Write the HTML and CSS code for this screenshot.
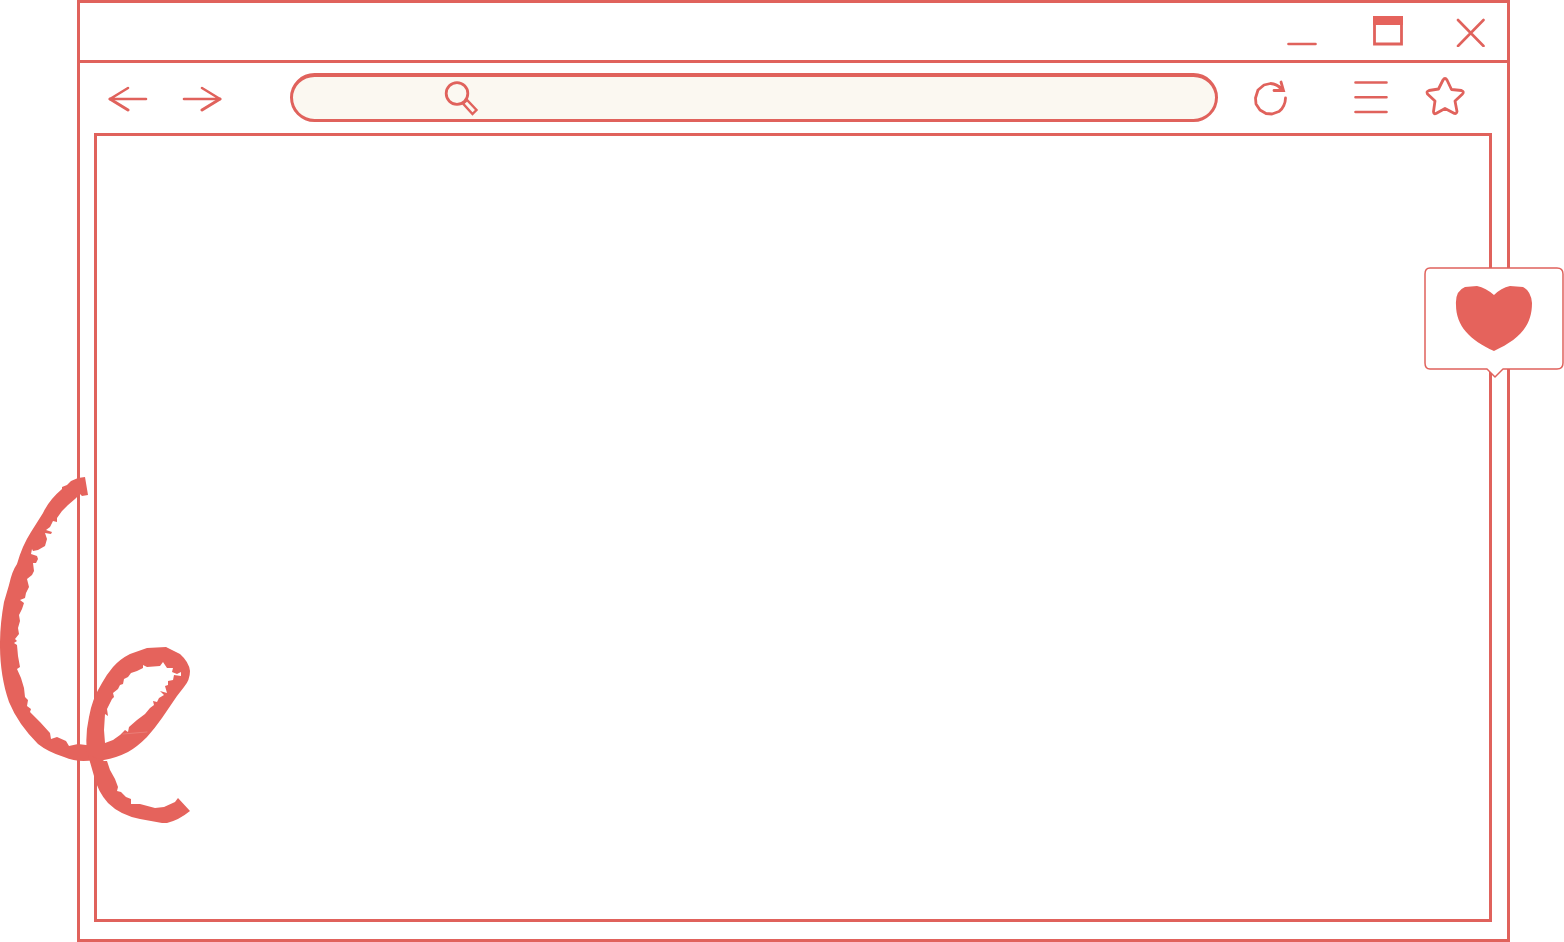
FILE: index.html
```html
<!DOCTYPE html>
<html lang="en">
<head>
    <meta charset="UTF-8">
    <meta name="viewport" content="width=device-width, initial-scale=1.0">
    <title>Browser Window</title>
    <link rel="stylesheet" href="styles.css">
</head>
<body>

<div class="window">
    <header class="titlebar">
        <button type="button" aria-label="Minimize">
            <svg width="34" height="32" viewBox="0 0 34 32"><path d="M1.5 29H28.500" stroke-width="2.6"/></svg>
        </button>
        <button type="button" aria-label="Maximize">
            <svg width="30" height="32" viewBox="0 0 30 32">
                <path d="M1.5 2.5H28.5V29H1.5Z" stroke-width="2.8" stroke-linejoin="miter"/>
                <path class="solid" d="M0 1H30V10H0Z"/>
            </svg>
        </button>
        <button type="button" aria-label="Close">
            <svg width="32" height="32" viewBox="0 0 32 32"><path d="M3 5L28.5 31M28.5 5L3 31" stroke-width="2.6"/></svg>
        </button>
    </header>

    <nav class="toolbar">
        <button type="button" aria-label="Back">
            <svg width="40" height="40" viewBox="0 0 40 40">
                <path d="M38 21H3M20 10L2 21" stroke-width="2.6"/>
                <path d="M2 21L20 32" stroke-width="3"/>
            </svg>
        </button>
        <button type="button" class="forward" aria-label="Forward">
            <svg width="40" height="40" viewBox="0 0 40 40">
                <path d="M2 21H37M20 10L38 21" stroke-width="2.6"/>
                <path d="M38 21L20 32" stroke-width="3"/>
            </svg>
        </button>
        <form class="search">
            <svg width="36" height="38" viewBox="0 0 36 38" aria-hidden="true">
                <circle cx="13" cy="14.500" r="10.800" stroke-width="2.8"/>
                <path d="M19 24.500L23 21L32.500 31L28.500 35Z" stroke-width="2.4" stroke-linejoin="miter"/>
            </svg>
            <input type="text" aria-label="Search">
        </form>
        <button type="button" class="reload" aria-label="Reload">
            <svg width="36" height="40" viewBox="0 0 36 40">
                <path d="M32.5 20C32.5 25 30 31 26 33.5L19 36L13 35.5L7 32L3 26L2.5 20L5 12L11 7L17.5 5.500C23 5.800 26 8 29 11" stroke-width="2.8"/>
                <path d="M28 4L30.500 12.500H21" stroke-linejoin="miter" stroke-width="2.800"/>
                <path class="solid" d="M22 6L31 13L20 14L26 11Z"/>
            </svg>
        </button>
        <button type="button" class="menu" aria-label="Menu">
            <svg width="34" height="40" viewBox="0 0 34 40"><path d="M1.5 4.500H32.500M1.5 19.300H32.500M1.5 34H32.500" stroke-width="2.600"/></svg>
        </button>
        <button type="button" class="bookmark" aria-label="Bookmark">
            <svg width="40" height="40" viewBox="0 0 40 40">
                <path d="M18 2Q20 -1 22 2L26.500 11.500L36.500 12.500Q39.5 13.500 37.5 16L30 23L32 33.500Q31.500 36 29.5 35.500L20 30.500L11 35.500Q8.500 36.500 8.500 33.500L10 23L2.500 16Q1 13.500 4 12.500L13.500 11Z" stroke-width="2.800"/>
            </svg>
        </button>
    </nav>

    <main class="page"></main>
</div>

<svg class="scribble" width="192" height="350" viewBox="0 476 192 350" aria-hidden="true">
    <!-- big stroke on the left -->
    <path d="M85 477L88 495L82 496L80 494L75 499L68 505L62 511L57 518L57 522L53 521L50 527L46 530L52 532L51 534L45 533L47 539L45 546L38 550L33 551L32 549L31 554L37 556L38 559L36 563L33 563L34 571L32 575L27 579L29 587L26 593L25 598L20 600L24 603L22 609L19 615L20 621L18 628L19 634L15 639L17 641L14 643L17 645L18 656L20 667L17 669L21 678L24 688L25 697L28 700L27 706L31 709L30 712L40 722L50 733L51 739L57 737L66 741L69 746L78 744L94 746V760Q78 763 64 757Q48 752 38 744Q18 724 9 702C-2 670 -2 635 4 602L9 585Q12 571 17 564Q22 546 31 532L43 513Q49 500 62 489V487L67 485L71 481L78 478Z"/>
    <!-- loop -->
    <path fill-rule="evenodd" d="M87 752Q85 735 89 717Q92 699 102 683Q107 674 113 667Q120 659 130 654L147 648L166 647L180 654Q189 662 190 671Q190 680 184 687L177 696L162 718Q155 728 147 737Q137 747 128 752Q116 758 104 760L95 766ZM105 743L104 730L105 714L108 716L107 709L112 699L114 697L113 693L118 689L120 685L123 684L124 679L128 677L131 673L137 671L143 668L143 665L147 667L160 666L163 662L167 668L173 668L172 672L177 674L181 672L181 676L174 675L173 680L168 681L168 685L165 686L167 693L160 691L164 695L159 698L157 702L153 701L154 705L150 708L145 714L137 720L129 727L128 732L125 730L120 735L113 740Z"/>
    <!-- tail -->
    <path d="M88 755L104 761H107L110 770L115 779L118 787L117 791L121 792L126 797L131 799L131 804L140 804L155 808L164 807L175 802L178 798L190 811Q179 820 167 823H162L140 819Q120 815 108 803Q98 792 94 776Z"/>
    <path class="scratch" d="M123 734L147 732"/>
</svg>

<svg class="bubble" width="140" height="112" viewBox="0 0 140 112" role="img" aria-label="Like">
    <path class="box" d="M6 1H133Q139 1 139 7V96Q139 102 133 102H79L71 110L63 102H6Q1 102 1 96V7Q1 1 6 1Z"/>
    <path class="solid" d="M70 28Q77 21 86 19L99 20Q107 24 108 36C108 60 94 73 70 84C46 73 32 59 32 38Q31 24 41 20L53 19Q62 21 70 28Z"/>
</svg>

</body>
</html>
```
FILE: styles.css
```css
* {
    box-sizing: border-box;
}
body {
    margin: 0;
    position: relative;
    min-height: 100vh;
    display: flex;
    background: white;
    font-family: "Liberation Sans", Arial, sans-serif;
}
svg {
    display: block;
    fill: none;
    stroke: #e0625c;
    stroke-width: 3;
    stroke-linecap: round;
    stroke-linejoin: round;
}
.solid {
    fill: #e5635c;
    stroke: none;
}
button {
    padding: 0;
    border: 0;
    background: none;
    cursor: pointer;
}
.window {
    flex: 1;
    display: flex;
    flex-direction: column;
    margin: 0 54px 0 77px;
    border: 3px solid #e0625c;
}
.titlebar {
    display: flex;
    justify-content: flex-end;
    align-items: center;
    gap: 52px;
    height: 60px;
    padding: 0 20px 2px 0;
    border-bottom: 3px solid #e0625c;
}
.toolbar {
    display: flex;
    align-items: center;
    height: 70px;
    padding: 0 42px 0 28px;
}
.forward {
    margin-left: 34px;
}
.search {
    flex: 1;
    display: flex;
    align-items: center;
    height: 49px;
    margin-left: 68px;
    margin-bottom: 2px;
    padding-left: 151px;
    border: 3px solid #e0625c;
    border-top-width: 4px;
    border-radius: 26px;
    background: #fbf8f1;
}
.search input {
    flex: 1;
    min-width: 0;
    height: 36px;
    margin-right: 24px;
    border: 0;
    outline: 0;
    background: none;
    font: inherit;
}
.reload {
    margin-left: 35px;
}
.menu {
    margin-left: 65px;
}
.bookmark {
    margin-left: 37px;
}
.bookmark svg {
    overflow: visible;
}
.page {
    flex: 1;
    margin: 0 15px 17px 14px;
    border: 3px solid #e0625c;
}
.scribble {
    position: absolute;
    left: 0;
    top: 476px;
    fill: #e5635c;
    stroke: none;
}
.scratch {
    stroke: #ea7d77;
    stroke-width: 1;
}
.bubble {
    position: absolute;
    right: 0;
    top: 267px;
}
.box {
    fill: white;
    stroke-width: 1.5;
}
```
